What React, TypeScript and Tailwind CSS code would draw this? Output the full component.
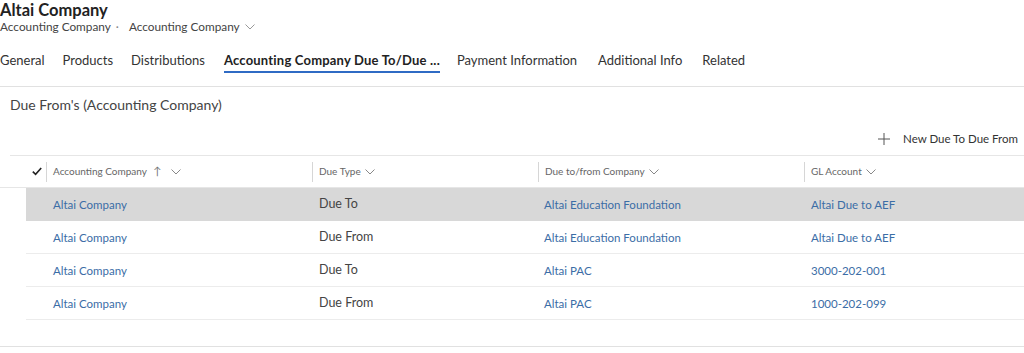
import React from "react";

const font = { fontFamily: 'Lato, "Open Sans", Arial, sans-serif' };

function Chevron({ className = "" }: { className?: string }) {
  return (
    <svg width="10" height="6" viewBox="0 0 10 6" className={className} fill="none" stroke="currentColor" strokeWidth="1">
      <path d="M0.5 0.5 L5 5 L9.5 0.5" />
    </svg>
  );
}

const rows = [
  { a: "Altai Company", t: "Due To", c: "Altai Education Foundation", g: "Altai Due to AEF", sel: true },
  { a: "Altai Company", t: "Due From", c: "Altai Education Foundation", g: "Altai Due to AEF" },
  { a: "Altai Company", t: "Due To", c: "Altai PAC", g: "3000-202-001" },
  { a: "Altai Company", t: "Due From", c: "Altai PAC", g: "1000-202-099" },
];

export default function App() {
  return (
    <div className="w-[1024px] h-[353px] bg-white overflow-hidden relative text-[#333]" style={font}>
      {/* Header */}
      <div className="h-[36px] -mt-[1px]">
        <div className="text-[16.5px] font-bold leading-[22px] text-[#222]">Altai Company</div>
        <div className="flex items-center text-[11.8px] leading-[16px] text-[#444] -mt-[2px]">
          <span>Accounting Company</span>
          <span className="mx-[5px] text-[#888]">·</span>
          <span className="ml-[5px]">Accounting Company</span>
          <Chevron className="ml-[5px] text-[#999]" />
        </div>
      </div>

      {/* Tabs */}
      <div className="flex items-start h-[52px] pt-[15px] border-b border-[#e1e1e1] text-[13px] text-[#333]">
        <div className="mr-[18px] leading-[20px]">General</div>
        <div className="mr-[18px] leading-[20px]">Products</div>
        <div className="mr-[19px] leading-[20px]">Distributions</div>
        <div className="flex flex-col mr-[17px]">
          <span className="font-bold text-[#222] leading-[20px] tracking-[0.2px]">Accounting Company Due To/Due ...</span>
          <span className="mt-[1px] h-[2px] bg-[#2f6bc4] block" />
        </div>
        <div className="mr-[21px] leading-[20px]">Payment Information</div>
        <div className="mr-[20px] leading-[20px]">Additional Info</div>
        <div className="leading-[20px]">Related</div>
      </div>

      {/* Section title */}
      <div className="pl-[10px] pt-[8px] text-[14px] leading-[20px] text-[#444]">Due From's (Accounting Company)</div>

      {/* Command bar */}
      <div className="flex justify-end items-center h-[26px] mt-[11px] pr-[6px] text-[11.5px] text-[#333]">
        <svg width="12" height="12" viewBox="0 0 12 12" className="mr-[13px] text-[#555]" fill="none" stroke="currentColor" strokeWidth="1">
          <path d="M6 0 V12 M0 6 H12" />
        </svg>
        <span>New Due To Due From</span>
      </div>

      {/* Grid */}
      <div className="mt-[3px] ml-[10px] border-t border-[#e6e6e6]">
        <div className="flex items-center h-[32px] border-b border-[#e6e6e6] -ml-[10px] text-[10px] text-[#666]">
          <div className="w-[46px] flex justify-end items-center pr-[4px]">
            <svg width="10" height="9" viewBox="0 0 10 9" fill="none" stroke="#222" strokeWidth="1.6">
              <path d="M0.8 4.6 L3.6 7.4 L9.2 1" />
            </svg>
          </div>
          <div className="w-[266px] h-[20px] border-l border-[#d6d6d6] flex items-center pl-[6px]">
            <span>Accounting Company</span>
            <span className="ml-[6px] text-[#777] text-[11px]">↑</span>
            <Chevron className="ml-[10px] text-[#888]" />
          </div>
          <div className="w-[226px] h-[20px] border-l border-[#d6d6d6] flex items-center pl-[6px]">
            <span>Due Type</span>
            <Chevron className="ml-[4px] text-[#888]" />
          </div>
          <div className="w-[266px] h-[20px] border-l border-[#d6d6d6] flex items-center pl-[6px]">
            <span>Due to/from Company</span>
            <Chevron className="ml-[4px] text-[#888]" />
          </div>
          <div className="flex-1 h-[20px] border-l border-[#d6d6d6] flex items-center pl-[6px]">
            <span>GL Account</span>
            <Chevron className="ml-[4px] text-[#888]" />
          </div>
        </div>
        <div className="ml-[16px]">
          {rows.map((r, i) => (
            <div
              key={i}
              className={
                "flex items-center h-[33px] pt-[1px] border-b " +
                (r.sel ? "bg-[#d8d8d8] border-[#d8d8d8]" : "border-[#ececec]")
              }
            >
              <div className="w-[27px]" />
              <div className="w-[266px] text-[11.5px] text-[#3b6da6]">{r.a}</div>
              <div className="w-[225px] text-[12.5px] text-[#444]">{r.t}</div>
              <div className="w-[267px] text-[11.5px] text-[#3b6da6]">{r.c}</div>
              <div className="flex-1 text-[11.5px] text-[#3b6da6]">{r.g}</div>
            </div>
          ))}
        </div>
      </div>

      <div className="absolute left-0 right-0 top-[346px] h-[1px] bg-[#e1e1e1]" />
    </div>
  );
}
